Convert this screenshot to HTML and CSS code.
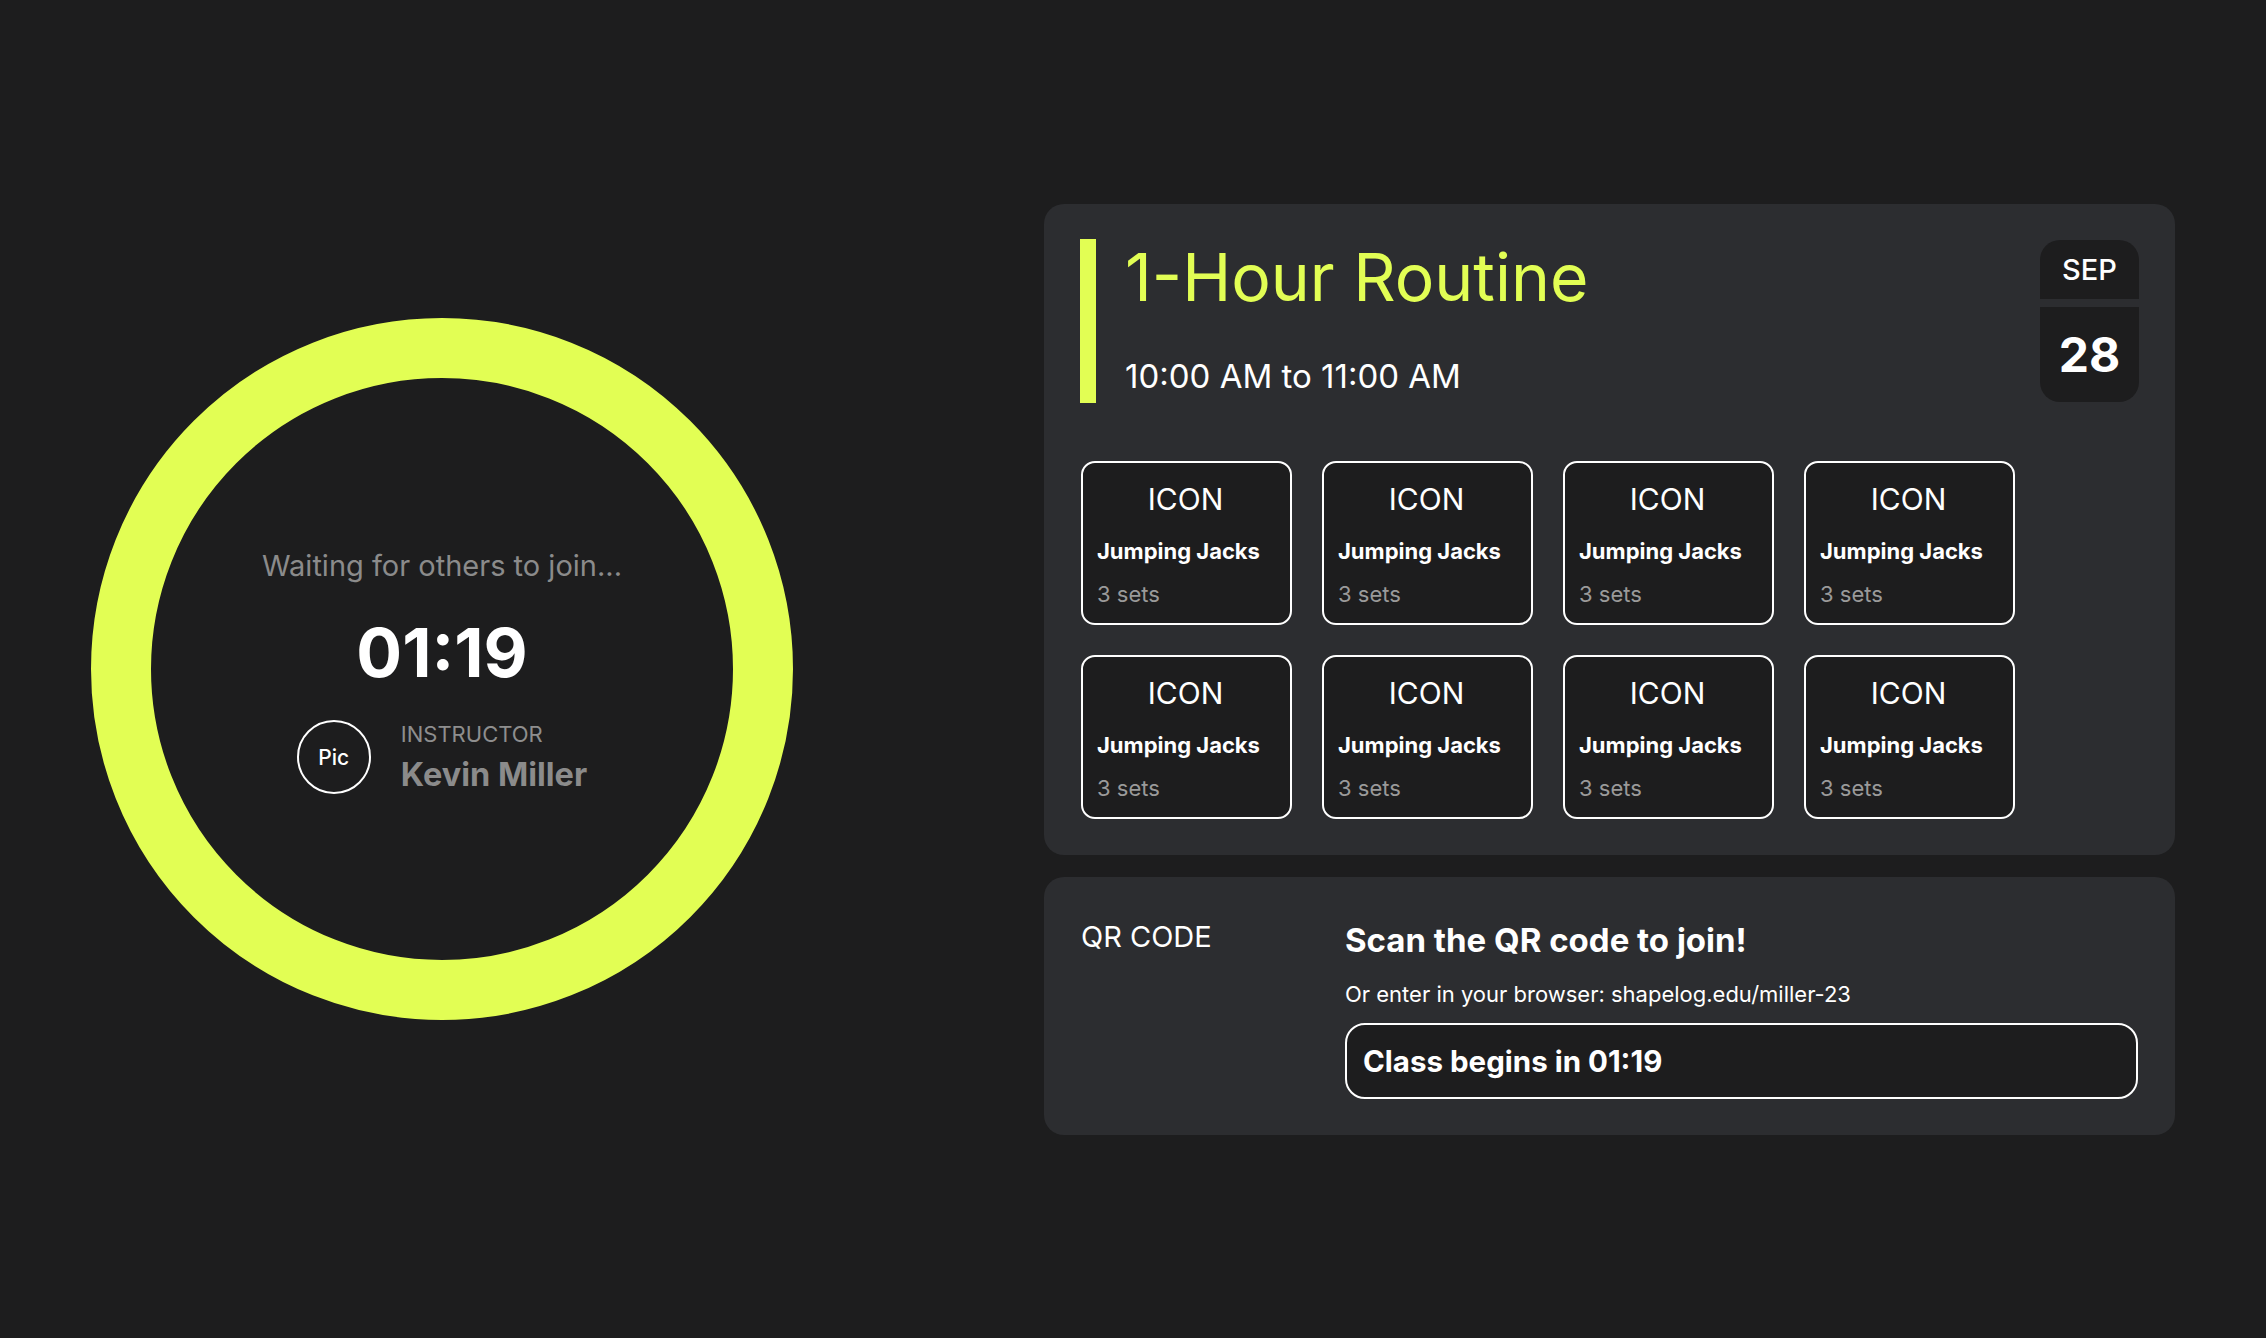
FILE: index.html
```html
<!DOCTYPE html>
<html lang="en">
<head>
<meta charset="utf-8">
<title>Class Lobby</title>
<link rel="stylesheet" href="styles.css">
</head>
<body>
<main class="page">
  <section class="ring">
    <div class="ring-content">
      <p class="waiting">Waiting for others to join...</p>
      <p class="countdown">01:19</p>
      <div class="instructor">
        <div class="avatar">Pic</div>
        <div class="instructor-text">
          <span class="instructor-label">INSTRUCTOR</span>
          <span class="instructor-name">Kevin Miller</span>
        </div>
      </div>
    </div>
  </section>

  <section class="side">
    <div class="card routine">
      <div class="routine-head">
        <div class="routine-title">
          <h1 class="title">1-Hour Routine</h1>
          <p class="time">10:00 AM to 11:00 AM</p>
        </div>
        <div class="date">
          <div class="date-month">SEP</div>
          <div class="date-day">28</div>
        </div>
      </div>
      <div class="exercises">
        <div class="tile"><div class="tile-icon">ICON</div><div class="tile-name">Jumping Jacks</div><div class="tile-sets">3 sets</div></div>
        <div class="tile"><div class="tile-icon">ICON</div><div class="tile-name">Jumping Jacks</div><div class="tile-sets">3 sets</div></div>
        <div class="tile"><div class="tile-icon">ICON</div><div class="tile-name">Jumping Jacks</div><div class="tile-sets">3 sets</div></div>
        <div class="tile"><div class="tile-icon">ICON</div><div class="tile-name">Jumping Jacks</div><div class="tile-sets">3 sets</div></div>
        <div class="tile"><div class="tile-icon">ICON</div><div class="tile-name">Jumping Jacks</div><div class="tile-sets">3 sets</div></div>
        <div class="tile"><div class="tile-icon">ICON</div><div class="tile-name">Jumping Jacks</div><div class="tile-sets">3 sets</div></div>
        <div class="tile"><div class="tile-icon">ICON</div><div class="tile-name">Jumping Jacks</div><div class="tile-sets">3 sets</div></div>
        <div class="tile"><div class="tile-icon">ICON</div><div class="tile-name">Jumping Jacks</div><div class="tile-sets">3 sets</div></div>
      </div>
    </div>

    <div class="card join">
      <div class="qr">QR CODE</div>
      <div class="join-info">
        <h2 class="join-title">Scan the QR code to join!</h2>
        <p class="join-url">Or enter in your browser: shapelog.edu/miller-23</p>
        <div class="join-box">Class begins in 01:19</div>
      </div>
    </div>
  </section>
</main>
</body>
</html>
```

FILE: styles.css
```css
* { box-sizing: border-box; }

html, body {
  margin: 0;
  padding: 0;
  background: #1d1d1e;
  color: #ffffff;
  font-family: "Inter", "Noto Sans", sans-serif;
}

p, h1, h2 { margin: 0; font-weight: inherit; }

.page {
  width: 2266px;
  height: 1338px;
  padding: 0 91px;
  display: flex;
  align-items: center;
  justify-content: space-between;
}

/* Left ring */
.ring {
  width: 702px;
  height: 702px;
  border-radius: 50%;
  border: 60px solid #e2fe54;
  display: flex;
  align-items: center;
  justify-content: center;
}

.ring-content {
  display: flex;
  flex-direction: column;
  align-items: center;
  padding-top: 4px;
}

.waiting {
  font-size: 29px;
  color: #8b8b8b;
}

.countdown {
  margin-top: 28px;
  font-size: 68px;
  font-weight: 700;
  color: #ffffff;
}

.instructor {
  margin-top: 27px;
  display: flex;
  align-items: center;
  gap: 30px;
}

.avatar {
  width: 74px;
  height: 74px;
  border-radius: 50%;
  border: 2px solid #ffffff;
  display: flex;
  align-items: center;
  justify-content: center;
  font-size: 21px;
  font-weight: 500;
}

.instructor-text {
  display: flex;
  flex-direction: column;
  gap: 8px;
}

.instructor-label {
  font-size: 22px;
  color: #8e8e8e;
}

.instructor-name {
  font-size: 32.5px;
  font-weight: 700;
  color: #8b8b8b;
}

/* Right side */
.side {
  width: 1131px;
  display: flex;
  flex-direction: column;
  gap: 22px;
}

.card {
  background: #2c2d30;
  border-radius: 20px;
}

.routine {
  padding: 35px 36px 36px 36px;
}

.routine-head {
  display: flex;
  justify-content: space-between;
  align-items: flex-start;
}

.routine-title {
  height: 164px;
  border-left: 16px solid #e2fe54;
  padding: 5px 0 10px 29px;
  display: flex;
  flex-direction: column;
  justify-content: space-between;
}

.title {
  font-size: 66px;
  line-height: 66px;
  font-weight: 400;
  color: #e2fe54;
}

.time {
  font-size: 33px;
  line-height: 33px;
  color: #ffffff;
}

.date {
  margin-top: 1px;
  width: 99px;
  display: flex;
  flex-direction: column;
  gap: 8px;
}

.date-month {
  height: 59px;
  background: #1d1d1e;
  border-radius: 20px 20px 0 0;
  display: flex;
  align-items: center;
  justify-content: center;
  font-size: 29px;
  font-weight: 500;
}

.date-day {
  height: 95px;
  background: #1d1d1e;
  border-radius: 0 0 20px 20px;
  display: flex;
  align-items: center;
  justify-content: center;
  font-size: 48px;
  font-weight: 700;
}

.exercises {
  margin-top: 58px;
  margin-left: 1px;
  display: grid;
  grid-template-columns: repeat(4, 211px);
  gap: 30px;
}

.tile {
  height: 164px;
  border: 2px solid #ffffff;
  border-radius: 14px;
  background: #1d1d1e;
  padding: 18px 16px 0 14px;
  display: flex;
  flex-direction: column;
}

.tile-icon {
  text-align: center;
  font-size: 30px;
  line-height: 36px;
}

.tile-name {
  margin-top: 21px;
  font-size: 22px;
  line-height: 26px;
  font-weight: 700;
}

.tile-sets {
  margin-top: 17px;
  font-size: 22px;
  line-height: 26px;
  color: #9a9a9a;
}

/* Join card */
.join {
  padding: 42px 37px 36px 37px;
  display: flex;
}

.qr {
  width: 264px;
  flex-shrink: 0;
  font-size: 29px;
}

.join-info {
  flex: 1;
  display: flex;
  flex-direction: column;
}

.join-title {
  margin-top: 2px;
  font-size: 33px;
  line-height: 39px;
  font-weight: 700;
}

.join-url {
  margin-top: 22px;
  font-size: 22px;
  line-height: 25px;
}

.join-box {
  margin-top: 16px;
  border: 2px solid #ffffff;
  border-radius: 20px;
  background: #1d1d1e;
  padding: 18px 16px;
  font-size: 29.5px;
  line-height: 36px;
  font-weight: 700;
}
```
